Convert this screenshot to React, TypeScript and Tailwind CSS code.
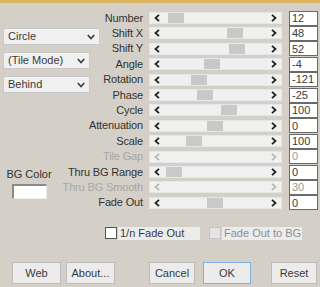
import React from "react";

type Row = { label: string; value: string; thumb: number | null; disabled?: boolean };

const rows: Row[] = [
  { label: "Number", value: "12", thumb: 168 },
  { label: "Shift X", value: "48", thumb: 227 },
  { label: "Shift Y", value: "52", thumb: 229 },
  { label: "Angle", value: "-4", thumb: 204 },
  { label: "Rotation", value: "-121", thumb: 191 },
  { label: "Phase", value: "-25", thumb: 197 },
  { label: "Cycle", value: "100", thumb: 221 },
  { label: "Attenuation", value: "0", thumb: 207 },
  { label: "Scale", value: "100", thumb: 186 },
  { label: "Tile Gap", value: "0", thumb: null, disabled: true },
  { label: "Thru BG Range", value: "0", thumb: 166 },
  { label: "Thru BG Smooth", value: "30", thumb: null, disabled: true },
  { label: "Fade Out", value: "0", thumb: 207 },
];

const font = { fontFamily: '"Liberation Sans", Arial, sans-serif' };

function Chevron({ dir, color }: { dir: "l" | "r"; color: string }) {
  return (
    <svg width="6" height="8" viewBox="0 0 6 8">
      {dir === "l" ? (
        <polyline points="5,0.8 1.5,4 5,7.2" fill="none" stroke={color} strokeWidth="1.8" />
      ) : (
        <polyline points="1,0.8 4.5,4 1,7.2" fill="none" stroke={color} strokeWidth="1.8" />
      )}
    </svg>
  );
}

function Down() {
  return (
    <svg width="8" height="6" viewBox="0 0 8 6">
      <polyline points="0.8,1 4,4.5 7.2,1" fill="none" stroke="#3a3a3a" strokeWidth="1.6" />
    </svg>
  );
}

function Select({ text, w }: { text: string; w: string }) {
  return (
    <div className={`flex h-[17px] ${w} items-center justify-between border border-[#c9c9c9] bg-[#f0f0f0] pl-[4px] pr-[4px] text-[11px] text-[#3a3a3a]`}>
      <span>{text}</span>
      <Down />
    </div>
  );
}

function Slider({ thumb, disabled }: { thumb: number | null; disabled?: boolean }) {
  const arrow = disabled ? "#b8b8b8" : "#222";
  return (
    <div className="relative flex h-[12px] w-[133px] items-center justify-between border border-[#e6e6e6] bg-[#f0f0f0] px-[4px]">
      <Chevron dir="l" color={arrow} />
      {thumb !== null && (
        <div
          className="absolute top-[0px] h-[10px] w-[16px] bg-[#c9c9c9]"
          style={{ left: thumb - 150 }}
        />
      )}
      <Chevron dir="r" color={arrow} />
    </div>
  );
}

function Btn({ text, w, ok }: { text: string; w: string; ok?: boolean }) {
  return (
    <div
      className={`flex h-[22px] ${w} items-center justify-center border ${
        ok ? "border-[#7fb0e0]" : "border-[#bcbcbc]"
      } bg-[#ececec] text-[11px] text-[#3a3a3a]`}
    >
      {text}
    </div>
  );
}

export default function App() {
  return (
    <div className="flex h-[287px] w-[320px] flex-col overflow-hidden bg-[#d4d0c8]" style={font}>
      <div className="h-[3px] bg-[#dab462]" />
      <div className="flex">
        <div className="flex w-[103px] shrink-0 flex-col pl-[3px] pt-[25px]">
          <Select text="Circle" w="w-[97px]" />
          <div className="mt-[7px]">
            <Select text="(Tile Mode)" w="w-[87px]" />
          </div>
          <div className="mt-[7px]">
            <Select text="Behind" w="w-[87px]" />
          </div>
          <div className="mt-[75px] flex w-[52px] flex-col items-center">
            <span className="text-[11px] leading-[13px] text-[#333]">BG Color</span>
            <div className="mt-[3px] h-[15px] w-[35px] border-l-2 border-t-2 border-b border-r border-l-[#8a8a8a] border-t-[#8a8a8a] border-b-[#eeeeee] border-r-[#eeeeee] bg-white" />
          </div>
        </div>
        <div className="flex flex-col pt-[7.3px]">
          {rows.map((r) => (
            <div key={r.label} className="flex h-[15.42px] items-center">
              <div className="flex w-[40px] justify-end whitespace-nowrap">
                <span
                  className={`text-[11px] leading-[13px] tracking-[-0.15px] ${
                    r.disabled ? "text-[#a6a6a6]" : "text-[#333]"
                  }`}
                >
                  {r.label}
                </span>
              </div>
              <div className="ml-[6px]">
                <Slider thumb={r.thumb} disabled={r.disabled} />
              </div>
              <div
                className={`ml-[7px] flex h-[15px] w-[29px] items-center border border-[#6a6a6a] bg-white pl-[2px] text-[11px] ${
                  r.disabled ? "text-[#9a9a9a]" : "text-[#3a3a3a]"
                }`}
              >
                {r.value}
              </div>
            </div>
          ))}
          <div className="mt-[16px] flex items-center pl-[2px]">
            <div className="h-[12px] w-[12px] border border-[#555] bg-white" />
            <div className="ml-[1px] flex h-[13px] w-[82px] items-center bg-[#ececec] pl-[2px] text-[11px] text-[#3a3a3a]">
              1/n Fade Out
            </div>
            <div className="ml-[9px] h-[12px] w-[12px] border border-[#c4c4c4] bg-[#e4e4e4]" />
            <div className="ml-[1px] flex h-[13px] w-[80px] items-center bg-[#ececec] pl-[2px] text-[11px] text-[#8e8e8e]">
              Fade Out to BG
            </div>
          </div>
        </div>
      </div>
      <div className="mb-[3px] mt-auto flex pl-[12px]">
        <Btn text="Web" w="w-[49px]" />
        <div className="ml-[5px]">
          <Btn text="About..." w="w-[49px]" />
        </div>
        <div className="ml-[34px]">
          <Btn text="Cancel" w="w-[46px]" />
        </div>
        <div className="ml-[8px]">
          <Btn text="OK" w="w-[48px]" ok />
        </div>
        <div className="ml-[20px]">
          <Btn text="Reset" w="w-[46px]" />
        </div>
      </div>
    </div>
  );
}
